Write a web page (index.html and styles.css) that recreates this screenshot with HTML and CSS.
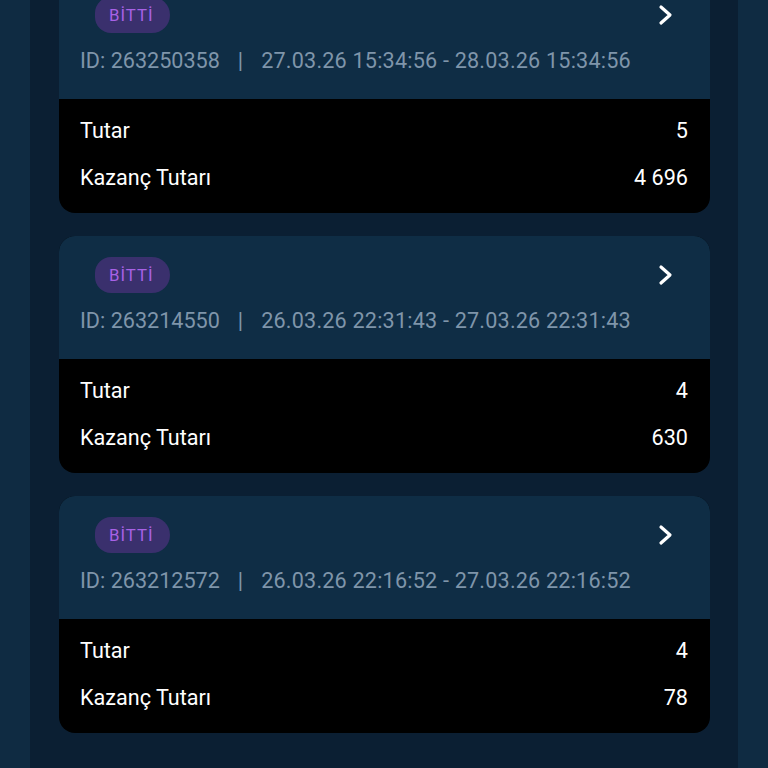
FILE: index.html
```html
<!DOCTYPE html>
<html lang="tr">
<head>
  <meta charset="UTF-8" />
  <meta name="viewport" content="width=device-width, initial-scale=1.0"/>
  <title>Bahisler</title>
  <link rel="stylesheet" href="styles.css">
</head>
<body>
  <div class="panel">
    <div class="bet-list" id="betList"></div>
  </div>

  <script>
    const bets = [
      { id: "263250358", from: "27.03.26 15:34:56", to: "28.03.26 15:34:56", amount: "5", win: "4 696" },
      { id: "263214550", from: "26.03.26 22:31:43", to: "27.03.26 22:31:43", amount: "4", win: "630" },
      { id: "263212572", from: "26.03.26 22:16:52", to: "27.03.26 22:16:52", amount: "4", win: "78" }
    ];

    const chevron = `
      <svg class="chevron" width="16" height="22" viewBox="0 0 16 22">
        <polyline points="3,3 12,11 3,19" fill="none" stroke="#fff" stroke-width="3.2" stroke-linecap="round" stroke-linejoin="round"/>
      </svg>`;

    function displayBets() {
      const list = document.getElementById("betList");
      bets.forEach(b => {
        const card = document.createElement("div");
        card.className = "bet";
        card.innerHTML = `
          <div class="bet-head">
            <div class="bet-top">
              <span class="badge">BİTTİ</span>
              ${chevron}
            </div>
            <p class="bet-meta">ID: ${b.id}<span class="sep">|</span><span class="dates">${b.from} - ${b.to}</span></p>
          </div>
          <div class="bet-body">
            <div class="row"><span>Tutar</span><span>${b.amount}</span></div>
            <div class="row"><span>Kazanç Tutarı</span><span>${b.win}</span></div>
          </div>
        `;
        list.appendChild(card);
      });
    }

    displayBets();
  </script>
</body>
</html>
```

FILE: styles.css
```css
body {
  margin: 0;
  background-color: #0f2b42;
  font-family: Roboto, "Liberation Sans", sans-serif;
  overflow: hidden;
}

.panel {
  display: flow-root;
  margin: 0 30px;
  padding: 0 28px 0 29px;
  min-height: 768px;
  background-color: #0b1f33;
}

.bet-list {
  display: flex;
  flex-direction: column;
  gap: 23px;
  margin-top: -24px;
}

.bet {
  border-radius: 16px;
  overflow: hidden;
  background-color: #000;
}

.bet-head {
  background-color: #0f2d45;
  padding: 21px 37px 26px 21px;
}

.bet-top {
  display: flex;
  justify-content: space-between;
  align-items: center;
}

.badge {
  margin-left: 15px;
  padding: 0 16px 0 14px;
  height: 36px;
  line-height: 36px;
  border-radius: 16px 18px 18px 16px;
  background-color: #3a306d;
  color: #a862e6;
  font-size: 16.8px;
  letter-spacing: 1px;
}

.chevron {
  display: block;
  margin-right: -1px;
}

.bet-meta {
  margin: 16px 0 0;
  line-height: 24px;
  font-size: 21.6px;
  color: #7f95aa;
  white-space: nowrap;
}

.sep {
  margin: 0 18px;
}

.dates {
  letter-spacing: 0.2px;
}

.bet-body {
  padding: 20px 22px 23px 21px;
  display: flex;
  flex-direction: column;
  gap: 23px;
}

.row {
  display: flex;
  justify-content: space-between;
  line-height: 24px;
  font-size: 21.6px;
  color: #fff;
}
```
